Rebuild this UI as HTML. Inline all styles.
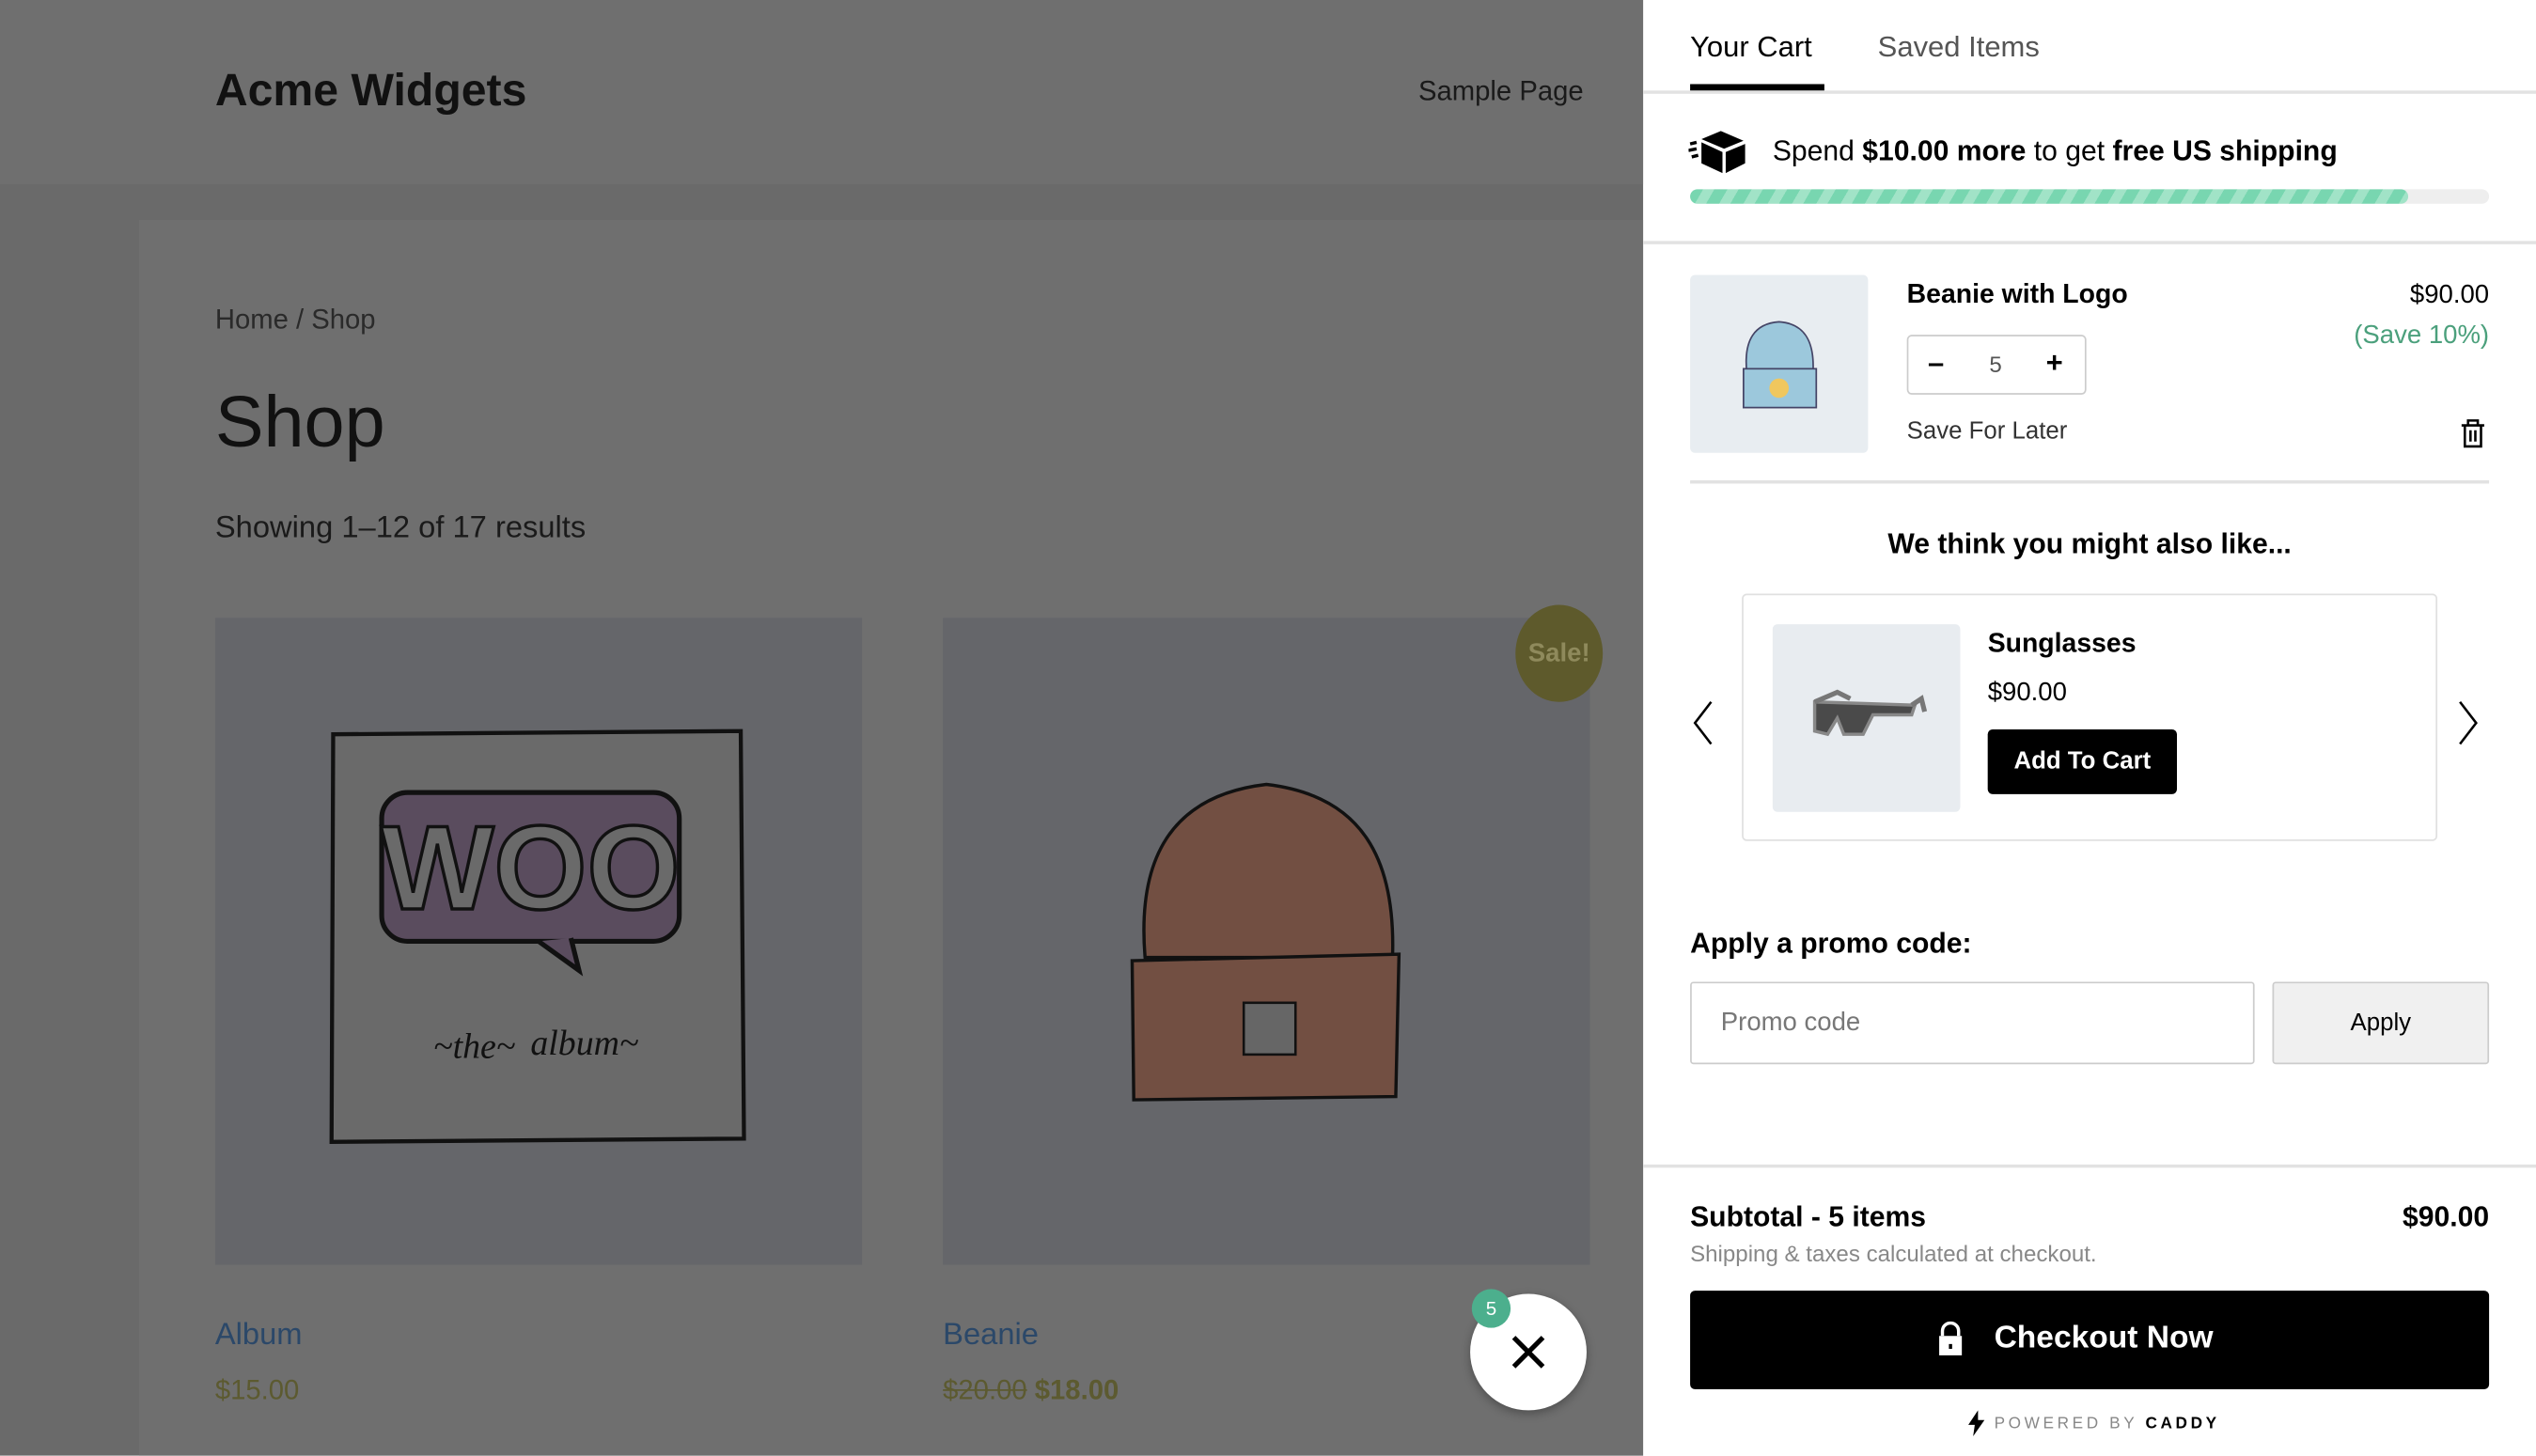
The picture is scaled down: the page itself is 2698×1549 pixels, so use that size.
<!DOCTYPE html>
<html><head><meta charset="utf-8"><style>
html,body{margin:0;padding:0;width:2698px;height:1548px;overflow:hidden;background:#fff}
#w{position:absolute;left:0;top:0;width:1568px;height:900px;transform:scale(1.72066);transform-origin:0 0;font-family:"Liberation Sans",sans-serif}
.a{position:absolute}
</style></head><body><div id="w">
<div class="a" style="left:0;top:0;width:1016px;height:900px;background:#6a6a6a"></div>
<div class="a" style="left:0;top:0;width:1016px;height:114px;background:#6f6f6f"></div>
<div class="a" style="left:86px;top:136px;width:930px;height:764px;background:#6f6f6f"></div>
<div class="a" style="left:133px;top:40px;font-size:28px;font-weight:bold;color:#111">Acme Widgets</div>
<div class="a" style="left:877px;top:47px;font-size:17px;color:#1a1a1a">Sample Page</div>
<div class="a" style="left:133px;top:188px;font-size:17px;color:#2a2a2a">Home / Shop</div>
<div class="a" style="left:133px;top:235px;font-size:45px;color:#111">Shop</div>
<div class="a" style="left:133px;top:316px;font-size:19px;color:#1a1a1a">Showing 1–12 of 17 results</div>
<div class="a" style="left:133px;top:382px;width:400px;height:400px;background:#65666a">
<svg width="400" height="400"><path d="M73 72 L325 70 L327 322 L72 324 Z" fill="#6a6a6a" stroke="#111" stroke-width="2.5"/>
<rect x="103" y="108" width="184" height="92" rx="16" fill="#5a4c5e" stroke="#111" stroke-width="3"/>
<path d="M200 200 L225 218 L220 198" fill="#5a4c5e" stroke="#111" stroke-width="3"/>
<text x="195" y="180" text-anchor="middle" font-size="74" font-weight="bold" fill="#6a6a6a" stroke="#111" stroke-width="2" font-family="Liberation Sans">WOO</text>
<text x="135" y="272" font-size="22" font-style="italic" fill="#111" font-family="Liberation Serif">~the~</text>
<text x="195" y="270" font-size="22" font-style="italic" fill="#111" font-family="Liberation Serif">album~</text></svg></div>
<div class="a" style="left:583px;top:382px;width:400px;height:400px;background:#65666a">
<svg width="400" height="400"><path d="M125 210 C120 150 140 110 200 103 C260 110 280 150 278 210 Z" fill="#724f42" stroke="#111" stroke-width="2"/>
<path d="M117 212 L282 208 L280 296 L118 298 Z" fill="#724f42" stroke="#111" stroke-width="2"/>
<rect x="186" y="238" width="32" height="32" fill="#666" stroke="#111" stroke-width="1.5"/></svg></div>
<div class="a" style="left:937px;top:374px;width:54px;height:60px;border-radius:50%;background:#5e5a2c;color:#8f8a5c;font-weight:bold;font-size:16px;line-height:62px;text-align:center">Sale!</div>
<div class="a" style="left:133px;top:815px;font-size:19px;color:#2b4869">Album</div>
<div class="a" style="left:133px;top:850px;font-size:17px;color:#5c5a30">$15.00</div>
<div class="a" style="left:583px;top:815px;font-size:19px;color:#2b4869">Beanie</div>
<div class="a" style="left:583px;top:850px;font-size:17px;color:#5c5a30"><s>$20.00</s> <b>$18.00</b></div>
<div class="a" style="left:909px;top:800px;width:72px;height:72px;border-radius:50%;background:#fff;box-shadow:0 2px 6px rgba(0,0,0,.3)">
<svg width="72" height="72"><path d="M27 27 L45 45 M45 27 L27 45" stroke="#000" stroke-width="3"/></svg></div>
<div class="a" style="left:910px;top:797px;width:24px;height:24px;border-radius:50%;background:#4caf8d;color:#fff;font-size:12px;line-height:24px;text-align:center">5</div>

<div class="a" style="left:1016px;top:0;width:552px;height:900px;background:#fff">
<div class="a" style="left:29px;top:19px;font-size:18px;color:#000">Your Cart</div>
<div class="a" style="left:29px;top:52px;width:83px;height:4px;background:#000"></div>
<div class="a" style="left:145px;top:19px;font-size:18px;color:#555">Saved Items</div>
<div class="a" style="left:0;top:56px;width:552px;height:2px;background:#e2e2e2"></div>
<svg class="a" style="left:28px;top:80px" width="36" height="28"><path d="M8 6 L20 1 L34 7 L22 12 Z" fill="#000"/><path d="M8 8 L21 14 L21 27 L8 21 Z M23 14 L35 9 L35 21 L23 27 Z" fill="#000"/><path d="M1 9 L5 8 M0 13 L5 12 M2 17 L6 16" stroke="#000" stroke-width="2"/></svg>
<div class="a" style="left:80px;top:83px;font-size:17.5px;color:#000">Spend <b>$10.00 more</b> to get <b>free US shipping</b></div>
<div class="a" style="left:29px;top:117px;width:494px;height:9px;border-radius:5px;background:#eee"></div>
<div class="a" style="left:29px;top:117px;width:444px;height:9px;border-radius:5px;background:repeating-linear-gradient(120deg,#78d6b0 0 7px,#a1e3c7 7px 13px)"></div>
<div class="a" style="left:0;top:149px;width:552px;height:2px;background:#e2e2e2"></div>
<div class="a" style="left:29px;top:170px;width:110px;height:110px;border-radius:3px;background:#e8edf1">
<svg width="110" height="110"><path d="M35 60 C33 40 40 30 55 29 C70 30 77 40 76 60 Z" fill="#9cc8dc" stroke="#446" stroke-width="1"/><rect x="33" y="58" width="45" height="24" fill="#9cc8dc" stroke="#446" stroke-width="1"/><circle cx="55" cy="70" r="6" fill="#f0c75e"/></svg></div>
<div class="a" style="left:163px;top:173px;font-size:16.5px;font-weight:bold;color:#000">Beanie with Logo</div>
<div class="a" style="left:163px;top:207px;width:109px;height:35px;border:1.5px solid #ccc;border-radius:3px">
<span class="a" style="left:12px;top:6px;font-size:18px;font-weight:bold">–</span><span class="a" style="left:50px;top:9px;font-size:14px;color:#555">5</span><span class="a" style="left:85px;top:6px;font-size:18px;font-weight:bold">+</span></div>
<div class="a" style="left:163px;top:258px;font-size:15px;color:#333">Save For Later</div>
<div class="a" style="right:29px;top:174px;font-size:16px;color:#000">$90.00</div>
<div class="a" style="right:29px;top:199px;font-size:16px;color:#4ba07c">(Save 10%)</div>
<svg class="a" style="left:503px;top:258px" width="20" height="20"><path d="M3 5 H17 M7 5 V2 H13 V5 M5 5 V18 H15 V5 M8.5 8 V15 M11.5 8 V15" fill="none" stroke="#000" stroke-width="1.5"/></svg>
<div class="a" style="left:29px;top:297px;width:494px;height:2px;background:#e2e2e2"></div>
<div class="a" style="left:0;width:552px;top:326px;text-align:center;font-size:17.5px;font-weight:bold;color:#000">We think you might also like...</div>
<svg class="a" style="left:30px;top:432px" width="16" height="30"><path d="M12 2 L2 15 L12 28" fill="none" stroke="#000" stroke-width="1.5"/></svg>
<svg class="a" style="left:502px;top:432px" width="16" height="30"><path d="M3 2 L13 15 L3 28" fill="none" stroke="#000" stroke-width="1.5"/></svg>
<div class="a" style="left:61px;top:367px;width:428px;height:151px;border:1.5px solid #e0e0e0;border-radius:3px">
<div class="a" style="left:18px;top:18px;width:116px;height:116px;border-radius:3px;background:#e8ecf0">
<svg width="116" height="116"><path d="M26 48 L88 50 L86 56 L62 56 L56 68 L44 68 L40 58 L34 68 L26 66 Z" fill="#4a4a4a" stroke="#888" stroke-width="2"/><path d="M26 48 L40 42 L48 46 M86 50 L92 46 L94 54" fill="none" stroke="#777" stroke-width="3"/></svg></div>
<div class="a" style="left:151px;top:21px;font-size:16.5px;font-weight:bold;color:#000">Sunglasses</div>
<div class="a" style="left:151px;top:52px;font-size:16px;color:#000">$90.00</div>
<div class="a" style="left:151px;top:83px;width:117px;height:40px;background:#000;border-radius:3px;color:#fff;font-size:15px;font-weight:bold;line-height:40px;text-align:center">Add To Cart</div></div>
<div class="a" style="left:29px;top:573px;font-size:17.5px;font-weight:bold;color:#000">Apply a promo code:</div>
<div class="a" style="left:29px;top:607px;border:1px solid #ccc;border-radius:2px;font-size:16px;color:#777;line-height:49px;padding-left:18px;box-sizing:border-box;width:349px;height:51px">Promo code</div>
<div class="a" style="left:389px;top:607px;width:134px;height:51px;box-sizing:border-box;border:1px solid #ccc;border-radius:2px;background:#f0f0f0;font-size:15px;line-height:49px;text-align:center;color:#000">Apply</div>
<div class="a" style="left:0;top:720px;width:552px;height:2px;background:#e2e2e2"></div>
<div class="a" style="left:29px;top:742px;font-size:17.5px;font-weight:bold;color:#000">Subtotal - 5 items</div>
<div class="a" style="right:29px;top:742px;font-size:17.5px;font-weight:bold;color:#000">$90.00</div>
<div class="a" style="left:29px;top:767px;font-size:14px;color:#888">Shipping &amp; taxes calculated at checkout.</div>
<div class="a" style="left:29px;top:798px;width:494px;height:61px;background:#000;border-radius:3px">
<svg class="a" style="left:152px;top:19px" width="18" height="22"><path d="M4 9 V6 A5 5 0 0 1 14 6 V9" fill="none" stroke="#fff" stroke-width="2"/><rect x="2" y="9" width="14" height="12" fill="#fff"/><rect x="8" y="14" width="2" height="3" fill="#000"/></svg>
<div class="a" style="left:188px;top:18px;font-size:19.5px;font-weight:bold;color:#fff">Checkout Now</div></div>
<svg class="a" style="left:200px;top:872px" width="12" height="16"><path d="M7 0 L1 9 H5 L4 16 L11 6 H7 Z" fill="#000"/></svg>
<div class="a" style="left:217px;top:875px;font-size:10px;letter-spacing:2.1px;color:#888">POWERED BY <b style="color:#000">CADDY</b></div>
</div>
</div></body></html>
